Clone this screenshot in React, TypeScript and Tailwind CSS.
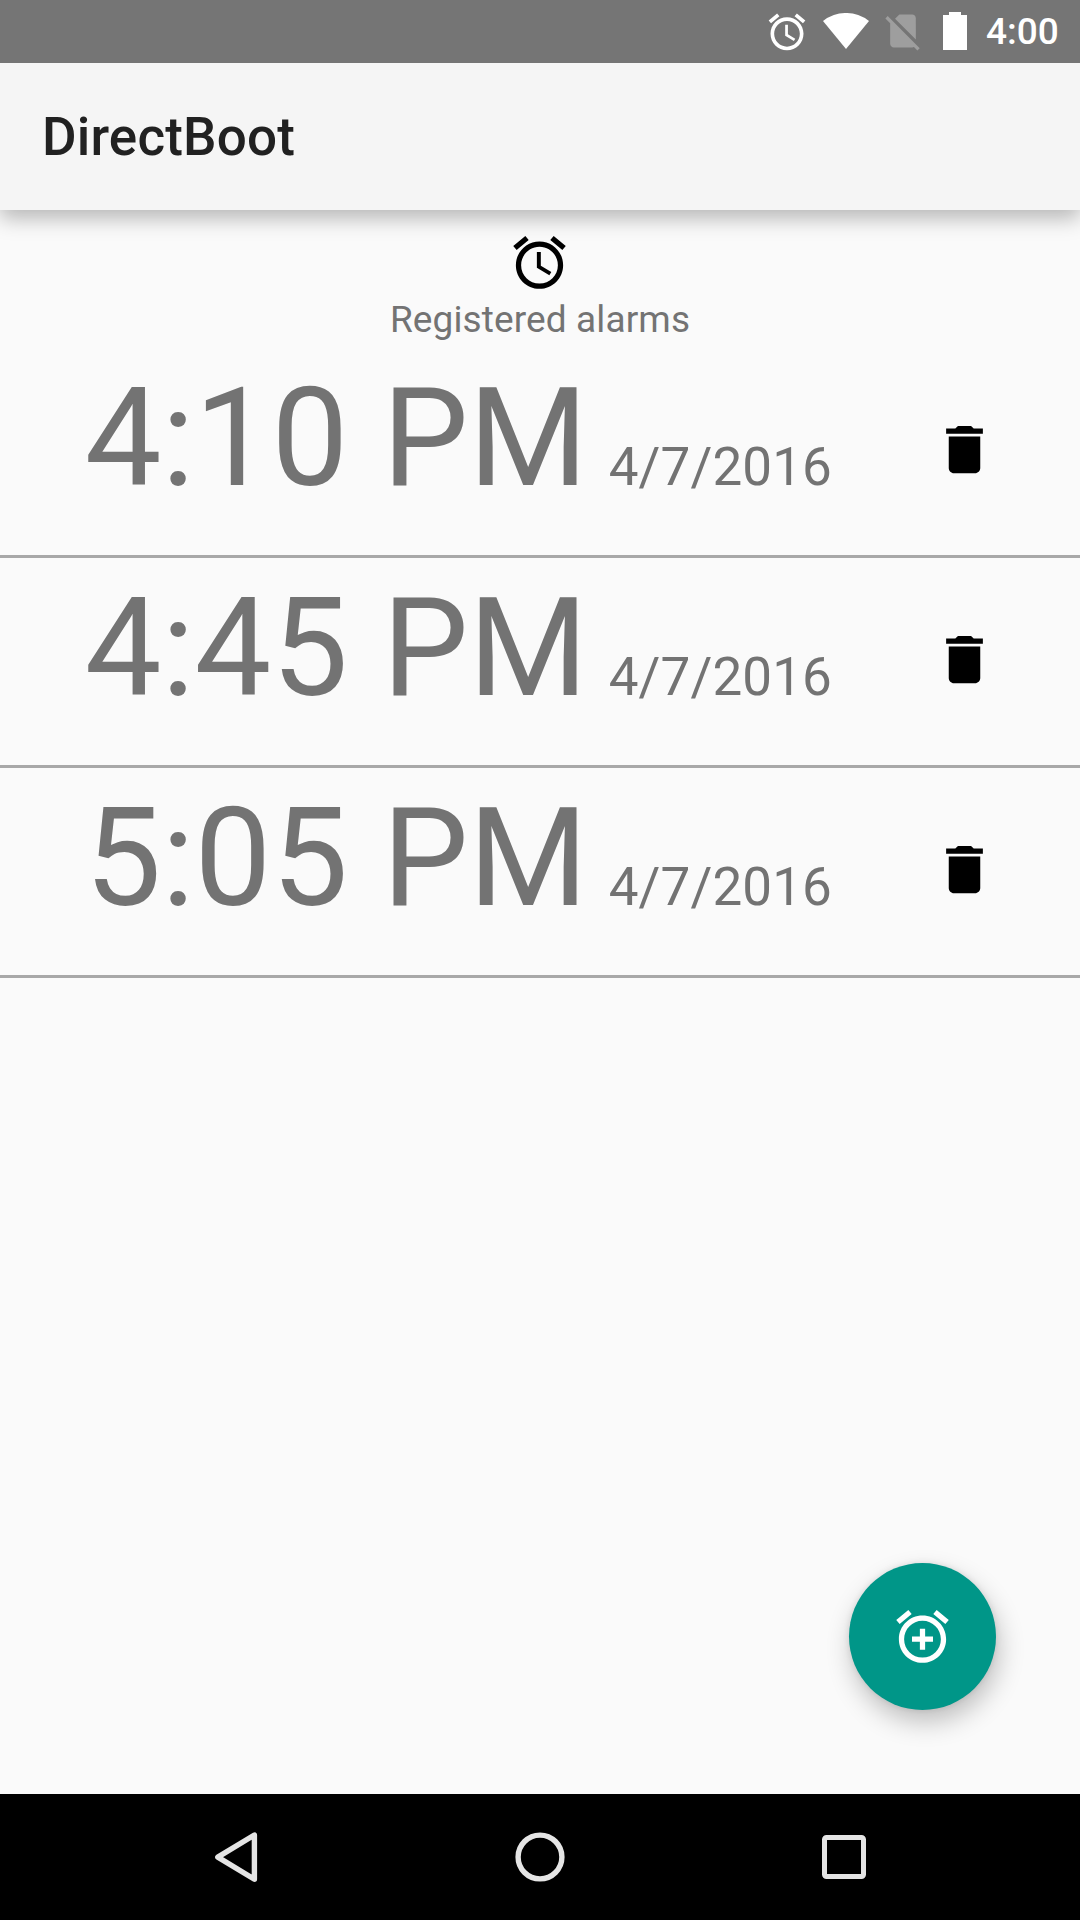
import React from 'react';

const ALARM = 'M22 5.72l-4.6-3.86-1.29 1.53 4.6 3.86L22 5.72zM7.88 3.39L6.6 1.86 2 5.71l1.29 1.53 4.59-3.85zM12.5 8H11v6l4.75 2.85.75-1.23-4-2.37V8zM12 4c-4.97 0-9 4.03-9 9s4.02 9 9 9c4.97 0 9-4.03 9-9s-4.03-9-9-9zm0 16c-3.87 0-7-3.13-7-7s3.13-7 7-7 7 3.13 7 7-3.13 7-7 7z';
const ALARM_ADD = 'M7.88 3.39L6.6 1.86 2 5.71l1.29 1.53 4.59-3.85zM22 5.72l-4.6-3.86-1.29 1.53 4.6 3.86L22 5.72zM12 4c-4.97 0-9 4.03-9 9s4.02 9 9 9c4.97 0 9-4.03 9-9s-4.03-9-9-9zm0 16c-3.87 0-7-3.13-7-7s3.13-7 7-7 7 3.13 7 7-3.13 7-7 7zm1-11h-2v3H8v2h3v3h2v-3h3v-2h-3V9z';
const TRASH = 'M6 19c0 1.1.9 2 2 2h8c1.1 0 2-.9 2-2V7H6v12zM19 4h-3.5l-1-1h-5l-1 1H5v2h14V4z';
const NO_SIM = 'M18.99 5c0-1.1-.89-2-1.99-2h-7L7.66 5.34 19 16.68 18.99 5zM3.65 3.88L2.38 5.15 5 7.77V19c0 1.1.9 2 2 2h10.01c.35 0 .67-.1.96-.26l1.88 1.88 1.27-1.27L3.65 3.88z';

function Icon({ d, className }: { d: string; className: string }) {
  return (
    <svg viewBox="0 0 24 24" fill="currentColor" className={className}>
      <path d={d} />
    </svg>
  );
}

const alarms = [
  { time: '4:10 PM', date: '4/7/2016' },
  { time: '4:45 PM', date: '4/7/2016' },
  { time: '5:05 PM', date: '4/7/2016' },
];

export default function App() {
  return (
    <div className="relative flex h-[1920px] w-[1080px] flex-col overflow-hidden bg-[#fafafa] font-[Roboto,sans-serif]">
      <header className="z-20 flex h-[63px] shrink-0 items-start justify-end bg-[#757575] pr-[21px] text-white">
        <Icon d={ALARM} className="mt-[10px] size-11" />
        <svg viewBox="0 0 46 36" className="ml-[14px] mt-[13px] h-9 w-[46px]" fill="currentColor">
          <path d="M23 36L0 8A37 37 0 0 1 46 8Z" />
        </svg>
        <Icon d={NO_SIM} className="ml-[12px] mt-[9px] size-11 text-[#9e9e9e]" />
        <svg viewBox="0 0 24 38" className="ml-[18px] mt-[12px] h-[38px] w-6" fill="currentColor">
          <path d="M6 0H18V3H24V38H0V3H6Z" />
        </svg>
        <span className="ml-[19px] mt-[13px] w-[73px] whitespace-nowrap text-[37px] font-medium leading-none">4:00</span>
      </header>
      <div className="z-10 flex h-[147px] shrink-0 items-center bg-[#f5f5f5] pl-[42px] shadow-[0_8px_20px_rgba(0,0,0,0.28)]">
        <h1 className="pt-[2px] text-[53px] font-medium leading-none tracking-[0.17px] text-[#212121]">DirectBoot</h1>
      </div>
      <main className="flex grow flex-col">
        <div className="flex h-[138px] flex-col items-center pt-[21px] text-[#737373]">
          <Icon d={ALARM} className="mr-px size-[63px] text-black" />
          <p className="text-[37px] leading-[52px] tracking-[0.12px]">Registered alarms</p>
        </div>
        {alarms.map((a) => (
          <div key={a.time} className="flex h-[210px] items-start border-b-[3px] border-[#a8a8a8] text-[#737373]">
            <div className="flex w-[832px] items-baseline justify-end pt-[10px]">
              <span className="text-[136.7px] leading-[160px]">{a.time}</span>
              <span className="ml-[21px] text-[53px] tracking-[0.1px]">{a.date}</span>
            </div>
            <button className="ml-[101px] mt-[70px] text-black"><Icon d={TRASH} className="size-[63px]" /></button>
          </div>
        ))}
      </main>
      <button className="absolute left-[849px] top-[1563px] flex size-[147px] items-center justify-center rounded-full bg-[#009688] text-white shadow-[3px_12px_26px_rgba(0,0,0,0.24),0_0_6px_rgba(0,0,0,0.1)]">
        <Icon d={ALARM_ADD} className="size-[63px]" />
      </button>
      <nav className="flex h-[126px] shrink-0 items-center bg-black">
        <svg viewBox="0 0 1080 126" className="h-[126px] w-[1080px]" fill="none" stroke="#e5e5e5" strokeWidth="5.4">
          <path d="M254.4 41V85.2L217.8 63.1Z" strokeLinejoin="round" />
          <circle cx="540" cy="63" r="21.9" />
          <rect x="824.5" y="43.5" width="39" height="39" rx="2" strokeWidth="5" />
        </svg>
      </nav>
    </div>
  );
}
